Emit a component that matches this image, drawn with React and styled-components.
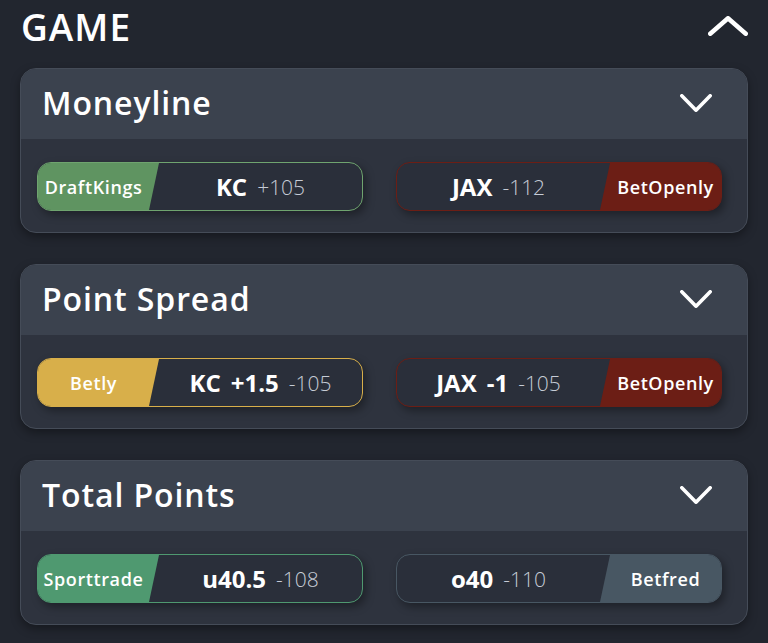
import React from "react";
import styled, { createGlobalStyle } from "styled-components";

const GlobalStyle = createGlobalStyle`
    * { box-sizing: border-box; }
    body {
        margin: 0;
        background: #22262f;
        font-family: "Open Sans", Lato, "Noto Sans", sans-serif;
        color: #fff;
    }
`;

const markets = [
    {
        title: "Moneyline",
        bets: [
            { book: "DraftKings", color: "#5f9461", border: "#6fa46f", side: "left", team: "KC", odds: "+105" },
            { book: "BetOpenly", color: "#6c1e15", border: "#6c1e15", side: "right", team: "JAX", odds: "-112" },
        ],
    },
    {
        title: "Point Spread",
        bets: [
            { book: "Betly", color: "#d8af4a", border: "#d8af4a", side: "left", team: "KC", line: "+1.5", odds: "-105" },
            { book: "BetOpenly", color: "#6c1e15", border: "#6c1e15", side: "right", team: "JAX", line: "-1", odds: "-105" },
        ],
    },
    {
        title: "Total Points",
        bets: [
            { book: "Sporttrade", color: "#4f9970", border: "#4f9970", side: "left", team: "u40.5", odds: "-108" },
            { book: "Betfred", color: "#485763", border: "#485763", side: "right", team: "o40", odds: "-110" },
        ],
    },
];

function Chevron({ up, size }) {
    const w = size === "big" ? 40 : 32;
    const h = size === "big" ? 20 : 18;
    const sw = size === "big" ? 4.5 : 3.6;
    const pts = up
        ? `${sw / 2},${h - sw / 2} ${w / 2},${sw / 2} ${w - sw / 2},${h - sw / 2}`
        : `${sw / 2},${sw / 2} ${w / 2},${h - sw / 2} ${w - sw / 2},${sw / 2}`;
    return (
        <svg width={w} height={h} viewBox={`0 0 ${w} ${h}`}>
            <polyline points={pts} fill="none" stroke="#fff" strokeWidth={sw} strokeLinecap="round" strokeLinejoin="round" />
        </svg>
    );
}

function BetButton({ bet }) {
    const label = (
        <BookLabel $bg={bet.color} $side={bet.side}>
            {bet.book}
        </BookLabel>
    );
    return (
        <Bet $border={bet.border}>
            {bet.side === "left" && label}
            <Pick>
                <Team>{bet.team}</Team>
                {bet.line && <Team>{bet.line}</Team>}
                <Odds>{bet.odds}</Odds>
            </Pick>
            {bet.side === "right" && label}
        </Bet>
    );
}

export default function App() {
    return (
        <Page>
            <GlobalStyle />
            <TopBar>
                <Heading>GAME</Heading>
                <Chevron up size="big" />
            </TopBar>
            <Cards>
                {markets.map((m) => (
                    <Card key={m.title}>
                        <CardHeader>
                            <CardTitle>{m.title}</CardTitle>
                            <Chevron size="small" />
                        </CardHeader>
                        <CardBody>
                            {m.bets.map((b) => (
                                <BetButton key={b.book + b.team} bet={b} />
                            ))}
                        </CardBody>
                    </Card>
                ))}
            </Cards>
        </Page>
    );
}

const Page = styled.div`
    padding: 0 20px 20px 20px;
    min-height: 643px;
`;

const TopBar = styled.div`
    height: 52px;
    display: flex;
    align-items: center;
    justify-content: space-between;
    margin-bottom: 16px;
    padding-left: 1px;
`;

const Heading = styled.h1`
    margin: 0;
    font-size: 37px;
    font-weight: 600;
    letter-spacing: 1px;
    line-height: 1;
`;

const Cards = styled.div`
    display: flex;
    flex-direction: column;
    gap: 31px;
`;

const Card = styled.div`
    border: 1px solid #454c58;
    border-radius: 16px;
    overflow: hidden;
    background: #2e333e;
    box-shadow: 0 4px 10px rgba(0, 0, 0, 0.35);
`;

const CardHeader = styled.div`
    height: 70px;
    background: #3b424e;
    display: flex;
    align-items: center;
    justify-content: space-between;
    padding: 0 35px 3px 21px;
`;

const CardTitle = styled.h2`
    margin: 0;
    font-size: 32px;
    font-weight: 600;
    letter-spacing: 0.9px;
    line-height: 1;
`;

const CardBody = styled.div`
    display: flex;
    gap: 33px;
    padding: 23px 25px 21px 16px;
`;

const Bet = styled.button`
    flex: 1;
    height: 49px;
    display: flex;
    align-items: stretch;
    padding: 0;
    border: 1.5px solid ${(p) => p.$border};
    border-radius: 14px;
    overflow: hidden;
    background: #2a2f3a;
    color: #fff;
    font-family: inherit;
    box-shadow: 3px 4px 8px rgba(0, 0, 0, 0.35);
    cursor: pointer;
`;

const BookLabel = styled.div`
    width: 121px;
    flex: none;
    display: flex;
    align-items: center;
    justify-content: center;
    background: ${(p) => p.$bg};
    font-size: 18px;
    font-weight: 600;
    letter-spacing: 0.6px;
    color: #fff;
    ${(p) =>
        p.$side === "left"
            ? `clip-path: polygon(0 0, 100% 0, calc(100% - 10px) 100%, 0 100%); padding-right: 10px;`
            : `clip-path: polygon(10px 0, 100% 0, 100% 100%, 0 100%); padding-left: 10px;`}
`;

const Pick = styled.div`
    flex: 1;
    display: flex;
    align-items: center;
    justify-content: center;
    gap: 10px;
`;

const Team = styled.span`
    font-size: 24px;
    font-weight: 700;
`;

const Odds = styled.span`
    font-size: 21px;
    font-weight: 300;
    color: #c6ccd6;
`;
